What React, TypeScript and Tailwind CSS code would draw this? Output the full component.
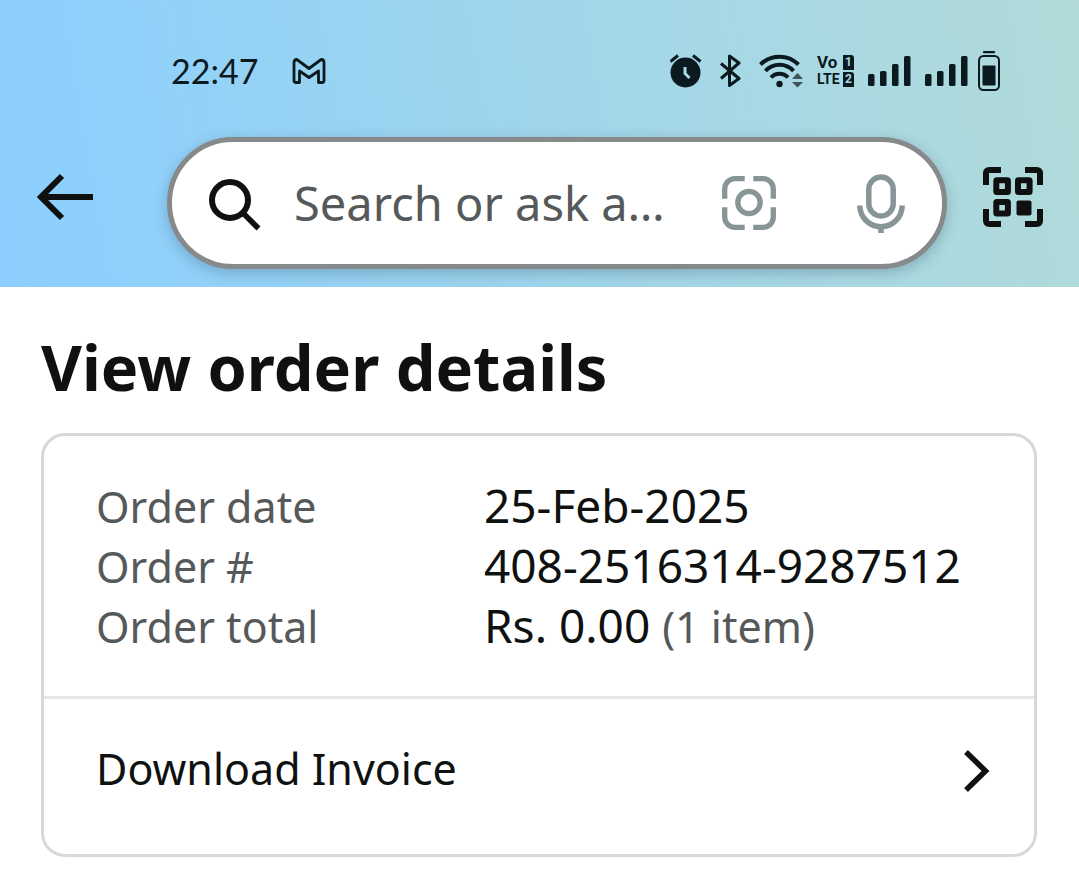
import { useState } from 'react'
import type { ReactNode } from 'react'

const SIGNAL_BARS = [
    { x: 0, y: 18 },
    { x: 12, y: 15 },
    { x: 24, y: 8 },
    { x: 36, y: 0 },
]

function GmailIcon() {
    return (
        <svg width="34" height="26" viewBox="0 0 34 26" fill="none" stroke="currentColor" strokeWidth="2.800" strokeLinejoin="round" aria-label="Gmail">
            <path d="M2 22.500V4.500Q2 1.500 4.800 1.500L17 10.500L29.200 1.500Q32 1.500 32 4.500V22.500Q32 24.500 30 24.500H26.500V13L17 19.500L7.500 13V24.500H4Q2 24.500 2 22.500Z" />
        </svg>
    )
}

function AlarmIcon() {
    return (
        <svg width="32" height="34" viewBox="0 0 32 34" fill="none" aria-label="Alarm">
            <circle cx="15.500" cy="18.500" r="15" fill="currentColor" />
            <path d="M0.500 7.500L8 1.500M23 1.500L30.500 7.500" stroke="currentColor" strokeWidth="3" />
            <path d="M15 13V19.500L19.500 24" stroke="#a8d8e6" strokeWidth="3" />
        </svg>
    )
}

function BluetoothIcon() {
    return (
        <svg width="21" height="34" viewBox="0 0 21 34" fill="none" stroke="currentColor" strokeWidth="3" strokeLinejoin="round" aria-label="Bluetooth">
            <path d="M1 9.500L19 24.500L9.500 31.500V2L19 9L1 24.500" />
        </svg>
    )
}

function WifiIcon() {
    return (
        <svg width="44" height="34" viewBox="0 0 44 34" fill="none" stroke="currentColor" strokeWidth="4" aria-label="Wi-Fi">
            <path d="M1.500 10.500A27 27 0 0 1 39.500 10.500" />
            <path d="M6.500 17A19 19 0 0 1 34.500 17" />
            <path d="M12 23.500A11.500 11.500 0 0 1 29 23.500" />
            <circle cx="20.500" cy="30" r="3.200" fill="currentColor" stroke="none" />
            <path d="M33 25L38.500 19L44 25ZM33 28L38.500 33.500L44 28Z" fill="#3f5359" stroke="none" />
        </svg>
    )
}

function VolteBadge() {
    return (
        <div className="grid grid-cols-[26px_11px] items-center gap-y-0.5 font-['Roboto',sans-serif] font-bold">
            <span className="text-[17px] leading-[15px]">Vo</span>
            <span className="rounded-tr-[3px] bg-[#0b1a1f] text-center text-[12px] leading-[15px] text-[#a8d8e6]">1</span>
            <span className="text-[14px] leading-[15px]">LTE</span>
            <span className="rounded-tr-[3px] bg-[#0b1a1f] text-center text-[12px] leading-[15px] text-[#a8d8e6]">2</span>
        </div>
    )
}

function SignalIcon() {
    return (
        <svg width="43" height="30" viewBox="0 0 43 30" fill="currentColor" aria-label="Signal">
            {SIGNAL_BARS.map((bar) => (
                <rect key={bar.x} x={bar.x} y={bar.y} width="6.500" height={30 - bar.y} rx="1.500" />
            ))}
        </svg>
    )
}

function BatteryIcon() {
    return (
        <svg width="22" height="40" viewBox="0 0 22 40" fill="none" aria-label="Battery">
            <path d="M6 1.200H16" stroke="currentColor" strokeWidth="2.200" strokeLinecap="round" />
            <rect x="1" y="5" width="20" height="34" rx="4.500" stroke="currentColor" strokeWidth="2" />
            <rect x="4.500" y="14.500" width="13" height="20" rx="1" fill="currentColor" />
        </svg>
    )
}

function BackIcon() {
    return (
        <svg width="58" height="48" viewBox="0 0 58 48" fill="none" stroke="currentColor" strokeWidth="6">
            <path d="M4 24H57" />
            <path d="M26 3L5 24L26 45" />
        </svg>
    )
}

function SearchIcon() {
    return (
        <svg width="54" height="56" viewBox="0 0 54 56" fill="none" stroke="currentColor" className="shrink-0">
            <circle cx="22" cy="25" r="18" strokeWidth="6" />
            <path d="M34.500 37.500L50.500 53.500" strokeWidth="5.500" />
        </svg>
    )
}

function LensIcon() {
    return (
        <svg width="54" height="54" viewBox="0 0 54 54" fill="none" stroke="currentColor" strokeWidth="5.300">
            <path d="M22.700 2.700H13A10.300 10.300 0 0 0 2.700 13V22.700M31.300 2.700H41A10.300 10.300 0 0 1 51.300 13V22.700M51.300 31.300V41A10.300 10.300 0 0 1 41 51.300H31.300M22.700 51.300H13A10.300 10.300 0 0 1 2.700 41V31.300" />
            <circle cx="27" cy="26.500" r="11.200" />
        </svg>
    )
}

function MicIcon() {
    return (
        <svg width="48" height="60" viewBox="0 0 48 60" fill="none" stroke="currentColor" strokeWidth="5.500">
            <rect x="11.800" y="4" width="24.400" height="39" rx="12.200" />
            <path d="M2.800 32.500A21.200 21.200 0 0 0 45.200 32.500M24 53V60" />
        </svg>
    )
}

function ScanIcon() {
    return (
        <svg width="60" height="60" viewBox="0 0 60 60" fill="none" stroke="currentColor" strokeWidth="6">
            <path d="M3 18V6.500Q3 3 6.500 3H18M42 3H53.500Q57 3 57 6.500V18M57 42V53.500Q57 57 53.500 57H42M18 57H6.500Q3 57 3 53.500V42" />
            <rect x="13.300" y="13.300" width="11.600" height="11.600" rx="0.500" strokeLinejoin="round" />
            <rect x="35" y="13.300" width="11.600" height="11.600" rx="0.500" strokeLinejoin="round" />
            <rect x="13.300" y="35" width="11.600" height="11.600" rx="0.500" strokeLinejoin="round" />
            <rect x="33.500" y="33.500" width="15" height="15" rx="2" fill="currentColor" stroke="none" />
        </svg>
    )
}

function ChevronIcon() {
    return (
        <svg width="26" height="48" viewBox="0 0 26 48" fill="none" stroke="currentColor" strokeWidth="5.500">
            <path d="M2 7L21.500 26L2 45" />
        </svg>
    )
}

function StatusBar() {
    return (
        <div className="flex h-[142px] items-center justify-between pr-[79px] pl-[171px] text-[#0b1a1f]">
            <div className="flex items-center gap-[34px]">
                <span className="font-['Lato',sans-serif] text-[34px] leading-10">22:47</span>
                <GmailIcon />
            </div>
            <div className="flex items-center">
                <div className="flex items-center gap-[18px]">
                    <AlarmIcon />
                    <BluetoothIcon />
                    <WifiIcon />
                </div>
                <div className="ml-[14px] flex items-center gap-[14px]">
                    <VolteBadge />
                    <SignalIcon />
                    <SignalIcon />
                </div>
                <div className="ml-[10px]">
                    <BatteryIcon />
                </div>
            </div>
        </div>
    )
}

function SearchBar() {
    const [query, setQuery] = useState('')

    return (
        <div className="-mt-[5px] flex items-start pr-9 pl-9 text-[#0f1111]">
            <button type="button" aria-label="Back" className="mt-9 shrink-0">
                <BackIcon />
            </button>
            <form className="ml-[73px] flex h-[132px] min-w-0 flex-1 items-center rounded-full border-[5px] border-[#868a8b] bg-white pr-[37px] pl-9 shadow-[0_4px_14px_rgba(60,90,110,0.35)]">
                <SearchIcon />
                <input
                    type="text"
                    aria-label="Search"
                    value={query}
                    onChange={(e) => setQuery(e.target.value)}
                    placeholder="Search or ask a…"
                    className="ml-8 min-w-0 flex-1 bg-transparent text-[47px] leading-[66px] outline-none placeholder:text-[#565959]"
                />
                <div className="flex items-center gap-[81px] text-[#879596]">
                    <button type="button" aria-label="Search with camera">
                        <LensIcon />
                    </button>
                    <button type="button" aria-label="Search with voice">
                        <MicIcon />
                    </button>
                </div>
            </form>
            <button type="button" aria-label="Scan code" className="mt-[30px] ml-9 shrink-0">
                <ScanIcon />
            </button>
        </div>
    )
}

function DetailRow({ label, children }: { label: string; children: ReactNode }) {
    return (
        <div className="flex items-baseline">
            <dt className="w-[388px] shrink-0 text-[43px] text-[#565959]">{label}</dt>
            <dd>{children}</dd>
        </div>
    )
}

export default function App() {
    return (
        <div className="min-h-screen bg-white font-['Noto_Sans',sans-serif] text-[#0f1111]">
            <header className="bg-linear-[80deg,#8bceff_0%,#8ed0fc_10%,#9fd5ec_48%,#a9d9e3_75%,#b1dad9_100%] pb-[18px]">
                <StatusBar />
                <SearchBar />
            </header>
            <main className="pt-10 pr-[42px] pb-6 pl-[41px]">
                <h1 className="text-[63px] leading-[80px] font-bold">View order details</h1>
                <section className="mt-[26px] rounded-3xl border-[3px] border-[#d5d9d9] text-[46px] leading-[59px]">
                    <dl className="border-b-[3px] border-[#e3e6e6] px-[52px] pt-10 pb-10">
                        <DetailRow label="Order date">25-Feb-2025</DetailRow>
                        <DetailRow label="Order #">408-2516314-9287512</DetailRow>
                        <DetailRow label="Order total">
                            Rs. 0.00 <span className="text-[43px] text-[#565959]">(1 item)</span>
                        </DetailRow>
                    </dl>
                    <a href="#invoice" className="flex items-center justify-between pt-10 pr-11 pb-14 pl-[52px] text-[43px]">
                        Download Invoice
                        <ChevronIcon />
                    </a>
                </section>
            </main>
        </div>
    )
}
